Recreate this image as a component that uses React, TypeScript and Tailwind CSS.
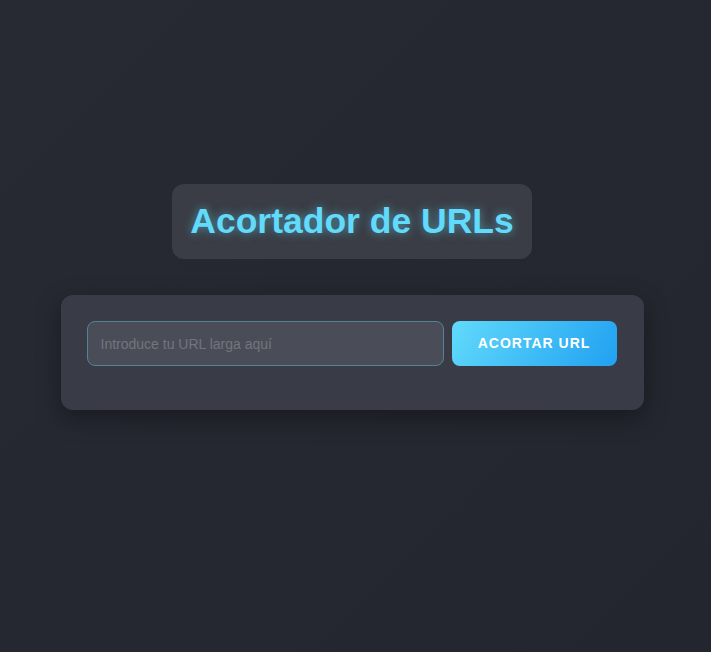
export default function App() {
  return (
    <main
      className="min-h-screen w-full bg-[linear-gradient(135deg,#272a33_0%,#252830_50%,#23262e_100%)] flex flex-col items-center pt-[184px] pr-[7px]"
      style={{ fontFamily: '"Liberation Sans", Arial, sans-serif' }}
    >
      {/* Title */}
      <div className="rounded-xl bg-[#3a3d45] px-[18px] py-[15px]">
        <h1 className="text-[35.5px] leading-[45px] font-bold text-[#61dafb] [text-shadow:0_0_10px_rgba(97,218,251,0.55)]">
          Acortador de URLs
        </h1>
      </div>

      {/* Card */}
      <div className="mt-[36px] w-[583px] rounded-xl bg-[#393c47] pl-[26px] pr-[27px] pt-[26px] pb-[44px] shadow-[0_8px_24px_rgba(0,0,0,0.35)]">
        <div className="flex gap-[8px]">
          <input
            type="text"
            placeholder="Introduce tu URL larga aquí"
            className="h-[45px] flex-1 rounded-lg border border-[#52839a] bg-[#4a4d57] px-[13px] text-[14px] text-white placeholder:text-[#72757d] outline-none"
          />
          <button className="h-[45px] w-[165px] rounded-lg bg-[linear-gradient(120deg,#61dafb_0%,#21a1f1_100%)] text-[14px] font-bold uppercase tracking-[1px] text-white">
            Acortar URL
          </button>
        </div>
      </div>
    </main>
  );
}
